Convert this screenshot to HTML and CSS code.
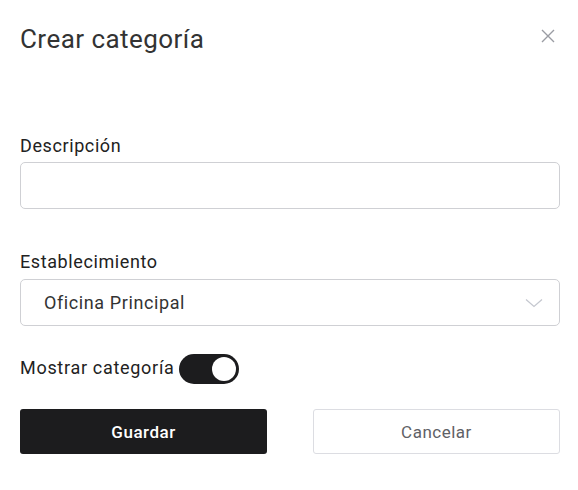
FILE: index.html
```html
<!DOCTYPE html>
<html lang="es">
<head>
<meta charset="utf-8">
<title>Crear categoría</title>
<link rel="stylesheet" href="styles.css">
</head>
<body>
<div class="modal">
  <div class="header">
    <h1 class="title">Crear categoría</h1>
    <button class="close" aria-label="Cerrar">
      <svg width="14" height="14" viewBox="0 0 14 14"><path d="M1 1L13 13M13 1L1 13" stroke="#9a9ca3" stroke-width="1.4" fill="none"/></svg>
    </button>
  </div>
  <div class="field first">
    <label class="label">Descripción</label>
    <div class="input"></div>
  </div>
  <div class="field">
    <label class="label">Establecimiento</label>
    <div class="select">
      <span class="select-value">Oficina Principal</span>
      <svg class="chevron" width="18" height="10" viewBox="0 0 18 10"><path d="M1 1.5L9 8.5L17 1.5" stroke="#c4c7cf" stroke-width="1.2" fill="none"/></svg>
    </div>
  </div>
  <div class="toggle-row">
    <span class="toggle-label">Mostrar categoría</span>
    <span class="toggle"><span class="knob"></span></span>
  </div>
  <div class="actions">
    <button class="btn primary">Guardar</button>
    <button class="btn secondary">Cancelar</button>
  </div>
</div>
</body>
</html>
```
FILE: styles.css
```css
* { box-sizing: border-box; }
html, body { margin: 0; background: #fff; }
body {
  font-family: Roboto, "Liberation Sans", sans-serif;
  color: #222;
}
.modal {
  padding: 23px 18px 0 20px;
}
.header {
  display: flex;
  justify-content: space-between;
  align-items: flex-start;
}
.title {
  margin: 0;
  font-size: 26px;
  line-height: 32px;
  font-weight: 400;
  letter-spacing: 0.45px;
  color: #333;
}
.close {
  border: none;
  background: none;
  padding: 0;
  margin: 6px 5px 0 0;
  width: 14px;
  height: 14px;
  display: flex;
}
.field { display: flex; flex-direction: column; }
.field.first { margin-top: 80px; }
.field + .field { margin-top: 42px; }
.label {
  font-size: 18px;
  line-height: 22px;
  letter-spacing: 0.6px;
  color: #222;
  margin-bottom: 5px;
}
.input, .select {
  height: 47px;
  border: 1px solid #cfd0d4;
  border-radius: 5px;
  background: #fff;
}
.select {
  display: flex;
  align-items: center;
  justify-content: space-between;
  padding: 0 16px 0 23px;
  margin-top: 1px;
}
.select-value {
  font-size: 18px;
  letter-spacing: 0.6px;
  color: #333;
}
.toggle-row {
  display: flex;
  align-items: center;
  gap: 4px;
  margin-top: 28px;
}
.toggle-label {
  font-size: 18px;
  line-height: 22px;
  letter-spacing: 0.7px;
  color: #222;
  position: relative;
  top: -1px;
}
.toggle {
  width: 60px;
  height: 30px;
  border-radius: 15px;
  background: #1c1c1e;
  display: flex;
  align-items: center;
  justify-content: flex-end;
  padding-right: 3px;
}
.knob {
  width: 24px;
  height: 24px;
  border-radius: 50%;
  background: #fff;
}
.actions {
  display: flex;
  justify-content: space-between;
  margin-top: 25px;
}
.btn {
  width: 247px;
  height: 45px;
  border-radius: 3px;
  font-family: Roboto, "Liberation Sans", sans-serif;
  font-size: 17px;
  letter-spacing: 0.5px;
  cursor: pointer;
}
.btn.primary {
  background: #1c1c1e;
  color: #fff;
  border: none;
  font-weight: 500;
}
.btn.secondary {
  background: #fff;
  color: #5f6166;
  border: 1px solid #dcdde2;
}
```
